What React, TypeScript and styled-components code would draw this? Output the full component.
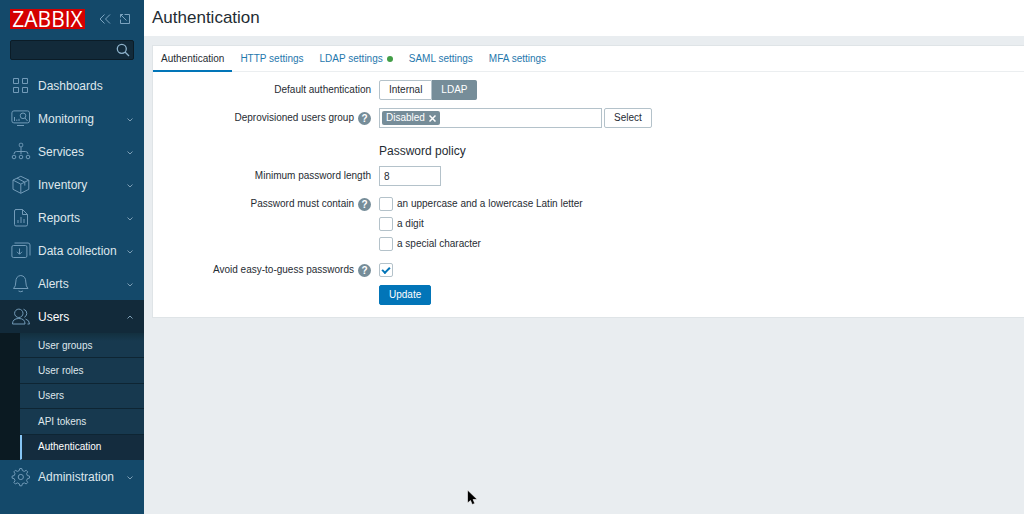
import React from 'react';
import styled, { createGlobalStyle, css } from 'styled-components';

const GlobalStyle = createGlobalStyle`
  *, *::before, *::after { box-sizing: border-box; }
  body {
    margin: 0;
    background: #e9edf0;
    color: #1f2c33;
    font: 10px/14px "Liberation Sans", Arial, sans-serif;
  }
  button, input { font: inherit; color: inherit; }
  ul { list-style: none; margin: 0; padding: 0; }
`;

const Page = styled.div`
  display: flex;
  min-height: 100vh;
`;

const Sidebar = styled.aside`
  flex: none;
  width: 144px;
  background: #14496a;
  color: #dfe7ec;
`;

const Brand = styled.div`
  display: flex;
  align-items: center;
  padding: 9px 10px 11px;
`;

const Logo = styled.a`
  flex: none;
  width: 75px;
  height: 20px;
  background: #d40000;
  color: #fff;
  font: 21px/20px "Open Sans", sans-serif;
  text-align: center;
  text-decoration: none;
`;

const ToolButton = styled.button`
  display: flex;
  width: 12px;
  height: 12px;
  margin-left: 8px;
  padding: 0;
  border: 0;
  background: none;
  color: #7ba3bf;
`;

const FirstTool = styled(ToolButton)`
  margin-left: 14px;
`;

const Search = styled.form`
  display: flex;
  align-items: center;
  height: 20px;
  margin: 0 10px 9px;
  padding-right: 3px;
  background: #122a3a;
  border: 1px solid #0b1c27;
  border-radius: 2px;
`;

const SearchInput = styled.input`
  flex: 1;
  width: 0;
  min-width: 0;
  padding: 0 6px;
  border: 0;
  outline: 0;
  background: none;
`;

const SearchButton = styled.button`
  display: flex;
  flex: none;
  padding: 0;
  border: 0;
  background: none;
  color: #8db2cb;
`;

const MenuLink = styled.a<{ $open?: boolean }>`
  display: flex;
  align-items: center;
  height: 33px;
  padding: 0 11px;
  font-size: 12px;
  color: ${p => (p.$open ? '#fff' : 'inherit')};
  background: ${p => (p.$open ? '#122a3a' : 'none')};
  text-decoration: none;
`;

const MenuIcon = styled.svg`
  flex: none;
  width: 20px;
  height: 20px;
  margin-right: 7px;
  fill: none;
  stroke: #729bb8;
`;

const MenuText = styled.span`
  flex: 1;
  white-space: nowrap;
`;

const Chevron = styled.svg`
  flex: none;
  width: 6px;
  height: 6px;
  fill: none;
  stroke: #7d9fb6;
`;

const SubMenu = styled.ul`
  display: grid;
  grid-auto-rows: 1fr;
  height: 127px;
  border-left: 20px solid #0b1a22;
  background: linear-gradient(#13303f, #17394f 8px);
`;

const SubLink = styled.a<{ $active?: boolean }>`
  display: flex;
  align-items: center;
  height: 100%;
  padding: 1px 0 0 18px;
  border-bottom: 1px solid #0e2533;
  color: ${p => (p.$active ? '#fff' : 'inherit')};
  text-decoration: none;
  ${p => p.$active && css`
    padding-left: 16px;
    border-bottom-color: transparent;
    border-left: 2px solid #86c5f4;
    background: #142c3e;
  `}
`;

const Main = styled.main`
  flex: 1;
  min-width: 0;
`;

const Header = styled.header`
  height: 36px;
  padding: 0 8px;
  background: #fff;
`;

const Title = styled.h1`
  margin: 0;
  font-size: 17px;
  line-height: 36px;
  font-weight: 400;
`;

const Panel = styled.section`
  margin: 9px 0 0 8px;
  background: #fff;
  border: 1px solid #dfe4e7;
  border-right: 0;
`;

const Tabs = styled.nav`
  display: flex;
  height: 26px;
  border-bottom: 1px solid #ebeef0;
`;

const Tab = styled.a<{ $active?: boolean }>`
  display: flex;
  align-items: center;
  height: 26px;
  padding: 2px 8px 0;
  border-bottom: 2px solid ${p => (p.$active ? '#0275b8' : 'transparent')};
  color: ${p => (p.$active ? '#1f2c33' : '#1f78ad')};
  text-decoration: none;
  white-space: nowrap;
`;

const StatusDot = styled.span`
  width: 6px;
  height: 6px;
  margin-left: 4px;
  border-radius: 50%;
  background: #429e47;
`;

const Form = styled.form`
  display: grid;
  grid-template-columns: 218px 1fr;
  gap: 8px;
  padding: 8px 0 12px;
`;

const LabelCell = styled.div`
  display: flex;
  justify-content: flex-end;
  align-items: center;
  height: 20px;
`;

const CheckLabelCell = styled(LabelCell)`
  height: 14px;
`;

const ListLabelCell = styled(CheckLabelCell)`
  margin-top: 3px;
`;

const Help = styled.button`
  width: 13px;
  height: 13px;
  margin-left: 4px;
  padding: 0;
  border: 0;
  border-radius: 50%;
  background: #768d99;
  color: #fff;
  font-size: 10px;
  line-height: 13px;
  font-weight: 700;
`;

const Field = styled.div`
  display: flex;
  align-items: center;
  grid-column: 2;
`;

const SectionTitle = styled.h2`
  margin: 8px 0 0;
  grid-column: 2;
  font-size: 12px;
  line-height: 14px;
  font-weight: 400;
`;

const Segments = styled.div`
  display: flex;
`;

const SegmentInput = styled.input`
  position: absolute;
  opacity: 0;
  pointer-events: none;
`;

const Segment = styled.label`
  height: 20px;
  padding: 0 9px;
  border: 1px solid #b4c2ca;
  border-radius: 2px 0 0 2px;
  line-height: 18px;
  & + & { border-left: 0; border-radius: 0 2px 2px 0; }
  &:has(input:checked) {
    background: #768d99;
    border-color: #768d99;
    color: #fff;
  }
`;

const MultiSelect = styled.div`
  display: flex;
  width: 223px;
  height: 20px;
  padding: 2px;
  border: 1px solid #b4c2ca;
`;

const Chip = styled.span`
  display: flex;
  align-items: center;
  padding: 0 4px;
  border-radius: 2px;
  background: #768d99;
  color: #fff;
`;

const ChipRemove = styled.button`
  display: flex;
  margin-left: 4px;
  padding: 0;
  border: 0;
  background: none;
`;

const MultiInput = styled.input`
  flex: 1;
  min-width: 0;
  padding: 0 4px;
  border: 0;
  outline: 0;
`;

const Button = styled.button<{ $primary?: boolean }>`
  height: 20px;
  padding: 0 9px;
  border: 1px solid ${p => (p.$primary ? '#0275b8' : '#b4c2ca')};
  border-radius: 2px;
  background: ${p => (p.$primary ? '#0275b8' : '#fff')};
  color: ${p => (p.$primary ? '#fff' : '#1f2c33')};
`;

const SelectButton = styled(Button)`
  margin-left: 2px;
`;

const NumberInput = styled.input`
  width: 62px;
  height: 20px;
  padding: 0 4px;
  border: 1px solid #b4c2ca;
`;

const CheckList = styled.div`
  display: grid;
  gap: 6px;
  margin: 3px 0 4px;
`;

const CheckLabel = styled.label`
  display: flex;
  align-items: center;
  height: 14px;
`;

const Checkbox = styled.input`
  appearance: none;
  width: 14px;
  height: 14px;
  margin: 0 4px 0 0;
  border: 1px solid #b4c2ca;
  border-radius: 2px;
  background: #fff;
  display: grid;
  place-content: center;
  &:checked::before {
    content: "";
    width: 8px;
    height: 5px;
    margin-top: -2px;
    border: solid #0275b8;
    border-width: 0 0 2px 2px;
    transform: rotate(-45deg);
  }
`;

const Pointer = styled.svg`
  position: absolute;
  left: 466px;
  top: 489px;
`;

const icons: Record<string, React.ReactNode> = {
  Dashboards: <path d="M2.5 2.5h5v5h-5zM11.5 2.5h5v5h-5zM2.5 11.5h5v5h-5zM11.5 11.5h5v5h-5z" />,
  Monitoring: (
    <>
      <rect x=".9" y="1.9" width="17.6" height="12" rx="2" />
      <path d="M6 16.5h7M3.5 8v4M5.8 10.5V12M8 9.8V12M14 9l2.5 3" />
      <circle cx="12" cy="6.8" r="2.8" />
    </>
  ),
  Services: (
    <>
      <rect x="8.3" y="1.3" width="3.4" height="3.4" rx="1" />
      <path d="M10 5v7M3 12q0-2.5 2.5-2.5h9q2.500 0 2.500 2.500" />
      <circle cx="3" cy="15" r="1.8" /><circle cx="10" cy="15" r="1.8" /><circle cx="17" cy="15" r="1.8" />
    </>
  ),
  Inventory: <path d="M9.8 1.3l8 3.8v9.2l-8 4-7.8-4V5.1zM2 5.1l7.8 4 8-4M9.8 9.1v9.2M6 3.2l7.8 4v3.4" strokeLinejoin="round" />,
  Reports: <path d="M4.5 1.5h7l5 5v10q0 1.5-1.5 1.5H5q-1.5 0-1.5-1.5V3q0-1.5 1.5-1.5M11.5 1.5v5h5M7 15v-3M10 15V9M13 15v-4" />,
  'Data collection': (
    <>
      <rect x=".9" y="4.5" width="15" height="12" rx="1.5" />
      <path d="M3.5 2H17q2 0 2 2v10.5M8.5 7.5V13M6 10.8l2.5 2.5 2.5-2.5" />
    </>
  ),
  Alerts: <path d="M2.5 14.5H17q-2.200-2-2.200-6.500 0-6-5-6.500-5 .5-5 6.500 0 4.500-2.300 6.500M7.500 17q2.200 1.500 4.500 0" strokeLinejoin="round" />,
  Users: (
    <>
      <circle cx="7.8" cy="6.3" r="4.2" />
      <path d="M1.5 17q0-5.5 6.3-5.5T14 17zM12.5 2.2q3.500 1 3.300 4.500-.2 2.500-2.500 3.600M14.500 12q4 1.200 4 5h-2" />
    </>
  ),
  Administration: (
    <>
      <circle cx="9.8" cy="10" r="2.6" />
      <path d="M8.200 3.600l.6-2.100h2l.6 2.100 1.900.8 1.900-1.100 1.500 1.500-1.100 1.900.8 1.900 2.100.5v2l-2.100.6-.8 1.900 1.100 1.900-1.500 1.500-1.900-1.100-1.900.8-.6 2.100h-2l-.6-2.100-1.900-.8-1.900 1.100-1.500-1.500L4 13.600l-.8-1.900-2.100-.6v-2l2.100-.5.8-1.900-1.100-1.900 1.500-1.500 1.900 1.100z" strokeLinejoin="round" />
    </>
  ),
};

const upperItems = ['Dashboards', 'Monitoring', 'Services', 'Inventory', 'Reports', 'Data collection', 'Alerts'];
const userItems = ['User groups', 'User roles', 'Users', 'API tokens', 'Authentication'];

function MenuItem({ name, open }: { name: string; open?: boolean }) {
  return (
    <MenuLink href="#" $open={open}>
      <MenuIcon viewBox="0 0 20 20" aria-hidden="true">{icons[name]}</MenuIcon>
      <MenuText>{name}</MenuText>
      {name !== 'Dashboards' && (
        <Chevron viewBox="0 0 6 6" aria-hidden="true">
          <path d={open ? 'M.5 4.5L3 2l2.500 2.500' : 'M.5 2.5L3 5l2.500-2.500'} />
        </Chevron>
      )}
    </MenuLink>
  );
}

export default function App() {
  return (
    <>
      <GlobalStyle />
      <Page>
        <Sidebar>
          <Brand>
            <Logo href="#">ZABBIX</Logo>
            <FirstTool aria-label="Collapse sidebar">
              <svg width="12" height="12" viewBox="0 0 12 12" fill="none" stroke="currentColor">
                <path d="M5.500 1.500L1 6l4.500 4.500M11 1.500L6.500 6l4.500 4.500" />
              </svg>
            </FirstTool>
            <ToolButton aria-label="Hide sidebar">
              <svg width="12" height="12" viewBox="0 0 12 12" fill="none" stroke="currentColor">
                <path d="M5.500 1.500h5v9h-9v-4M1.500 4.500v-3H4M1.500 1.500l6 6" />
              </svg>
            </ToolButton>
          </Brand>
          <Search role="search">
            <SearchInput type="text" aria-label="Search" />
            <SearchButton type="button" aria-label="Search">
              <svg width="14" height="14" viewBox="0 0 14 14" fill="none" stroke="currentColor" strokeWidth="1.3">
                <circle cx="5.8" cy="5.8" r="4.5" />
                <path d="M9 9l4 4" />
              </svg>
            </SearchButton>
          </Search>
          <nav aria-label="Main">
            <ul>
              {upperItems.map(name => <li key={name}><MenuItem name={name} /></li>)}
              <li>
                <MenuItem name="Users" open />
                <SubMenu>
                  {userItems.map(name => (
                    <li key={name}>
                      <SubLink href="#" $active={name === 'Authentication'}>{name}</SubLink>
                    </li>
                  ))}
                </SubMenu>
              </li>
              <li><MenuItem name="Administration" /></li>
            </ul>
          </nav>
        </Sidebar>
        <Main>
          <Header><Title>Authentication</Title></Header>
          <Panel>
            <Tabs aria-label="Authentication settings">
              <Tab href="#" $active>Authentication</Tab>
              <Tab href="#">HTTP settings</Tab>
              <Tab href="#">LDAP settings<StatusDot /></Tab>
              <Tab href="#">SAML settings</Tab>
              <Tab href="#">MFA settings</Tab>
            </Tabs>
            <Form>
              <LabelCell id="default-auth">Default authentication</LabelCell>
              <Field>
                <Segments role="radiogroup" aria-labelledby="default-auth">
                  <Segment><SegmentInput type="radio" name="auth" />Internal</Segment>
                  <Segment><SegmentInput type="radio" name="auth" defaultChecked />LDAP</Segment>
                </Segments>
              </Field>

              <LabelCell>
                <label htmlFor="group">Deprovisioned users group</label>
                <Help type="button">?</Help>
              </LabelCell>
              <Field>
                <MultiSelect>
                  <Chip>
                    Disabled
                    <ChipRemove type="button" aria-label="Remove Disabled">
                      <svg width="7" height="7" viewBox="0 0 7 7" stroke="#fff" strokeWidth="1.5">
                        <path d="M.5.5l6 6M6.500.5l-6 6" />
                      </svg>
                    </ChipRemove>
                  </Chip>
                  <MultiInput id="group" type="text" />
                </MultiSelect>
                <SelectButton type="button">Select</SelectButton>
              </Field>

              <SectionTitle>Password policy</SectionTitle>

              <LabelCell><label htmlFor="length">Minimum password length</label></LabelCell>
              <Field><NumberInput id="length" type="text" defaultValue="8" /></Field>

              <ListLabelCell id="must-contain">
                Password must contain
                <Help type="button">?</Help>
              </ListLabelCell>
              <CheckList role="group" aria-labelledby="must-contain">
                <CheckLabel><Checkbox type="checkbox" />an uppercase and a lowercase Latin letter</CheckLabel>
                <CheckLabel><Checkbox type="checkbox" />a digit</CheckLabel>
                <CheckLabel><Checkbox type="checkbox" />a special character</CheckLabel>
              </CheckList>

              <CheckLabelCell>
                <label htmlFor="avoid">Avoid easy-to-guess passwords</label>
                <Help type="button">?</Help>
              </CheckLabelCell>
              <Field><Checkbox id="avoid" type="checkbox" defaultChecked /></Field>

              <Field><Button type="submit" $primary>Update</Button></Field>
            </Form>
          </Panel>
        </Main>
      </Page>
      <Pointer width="13" height="18" viewBox="0 0 13 18" aria-hidden="true">
        <path d="M1.500 1v13l3-2.500 1.700 4 2.600-1-1.700-4h4.200z" fill="#000" stroke="#fff" strokeWidth=".6" />
      </Pointer>
    </>
  );
}
